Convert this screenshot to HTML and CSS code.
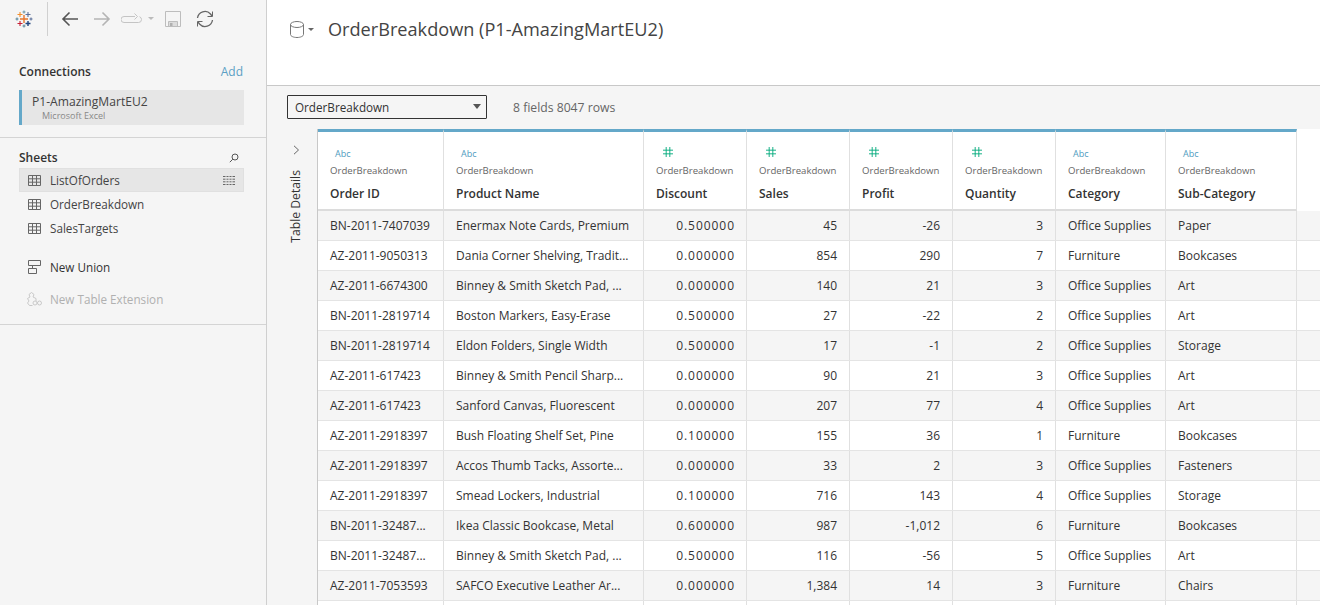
FILE: index.html
```html
<!DOCTYPE html>
<html lang="en">
<head>
<meta charset="utf-8">
<title>OrderBreakdown (P1-AmazingMartEU2)</title>
<link rel="stylesheet" href="styles.css">
</head>
<body>
<svg class="defs" width="0" height="0"><symbol id="hash" viewBox="0 0 11 11"><path d="M3.500 0v11M7.500 0v11M0 3.500h11M0 7.500h11" fill="none" stroke="#00a97a"/></symbol></svg>
<div class="app">
  <aside class="side">
    <div class="tools">
      <svg class="logo" width="18" height="18" viewBox="0 0 18 18" fill="none" stroke-width="1.100">
        <path d="M9 5v8M5 9h8" stroke="#e8762c" stroke-width="1.400"/>
        <path d="M5 2v5M2.500 4.500h5" stroke="#f28e2b"/>
        <path d="M13 2v5M10.500 4.500h5" stroke="#5b6f9a"/>
        <path d="M5 11v5M2.500 13.500h5" stroke="#c72035"/>
        <path d="M13 11v5M10.500 13.500h5" stroke="#1f447f" stroke-width="1.400"/>
        <path d="M9 .5v3M7.500 2h3" stroke="#7099a6"/>
        <path d="M9 14.500v3M7.500 16h3" stroke="#5b879b"/>
        <path d="M2 7.500v3M.5 9h3" stroke="#59879b"/>
        <path d="M16 7.500v3M14.500 9h3" stroke="#5b6f9a"/>
      </svg>
      <span class="vsep"></span>
      <svg class="ico back" width="18" height="16" viewBox="0 0 18 16" fill="none" stroke="#555" stroke-width="1.600"><path d="M17 8H2M8.500 1.500 2 8l6.500 6.500"/></svg>
      <svg class="ico fwd" width="18" height="16" viewBox="0 0 18 16" fill="none" stroke="#b4b4b4" stroke-width="1.600"><path d="M1 8h15M9.500 1.500 16 8l-6.500 6.500"/></svg>
      <svg class="ico redo" width="21" height="11" viewBox="0 0 21 11" fill="none" stroke="#c4c4c4" stroke-width="1"><path d="M14 3.500H3a2.500 2.500 0 0 0 0 6h14.500a3 3 0 0 0 3-3 3 3 0 0 0-2-2.800M13.500 .5 16.500 3.500 13.500 6.500"/></svg>
      <span class="caret-sm"></span>
      <svg class="ico save" width="16" height="16" viewBox="0 0 16 16" fill="none" stroke="#bdbdbd" stroke-width="1"><path d="M.5.500h15v15H.5z"/><path d="M3.500 15v-4.500h9V15" fill="#dcdcdc"/><path d="M5 12h2.500v3H5z" fill="#b0b0b0" stroke="none"/></svg>
      <svg class="ico sync" width="18" height="18" viewBox="0 0 18 18" fill="none" stroke="#666" stroke-width="1.300"><path d="M1.500 8A7.500 7.500 0 0 1 14.500 4L16 6M16.500 10A7.500 7.500 0 0 1 3.500 14L2 12"/><path d="M16.500 1.500V6.500H11.500M1.500 16.500V11.500H6.500" stroke-width="1"/></svg>
    </div>

    <section class="conn">
      <div class="head"><h2>Connections</h2><span class="add">Add</span></div>
      <div class="conn-item">
        <div class="conn-name">P1-AmazingMartEU2</div>
        <div class="conn-type">Microsoft Excel</div>
      </div>
    </section>

    <section class="sheets">
      <div class="head sheets-head">
        <h2>Sheets</h2>
        <svg width="10" height="10" viewBox="0 0 10 10" fill="none" stroke="#555" stroke-width="1"><circle cx="6" cy="4" r="3"/><path d="M3.800 6.200 .8 9.200"/></svg>
      </div>
      <ul class="list">
        <li class="item active">
          <svg class="tbl" width="13" height="11" viewBox="0 0 13 11" fill="none" stroke="#666"><path d="M.5.500h12v10H.5zM.5 3.800h12M.5 7.200h12M4.500 .5v10M8.500 .5v10"/></svg>
          <span>ListOfOrders</span>
          <svg class="rows" width="12" height="9" viewBox="0 0 12 9" fill="none" stroke="#666"><path d="M0 .5h12M0 3.200h12M0 5.800h12M0 8.500h12" /><path d="M3 0v9M6 0v9M9 0v9" stroke="#e6e6e6"/></svg>
        </li>
        <li class="item">
          <svg class="tbl" width="13" height="11" viewBox="0 0 13 11" fill="none" stroke="#666"><path d="M.5.500h12v10H.5zM.5 3.800h12M.5 7.200h12M4.500 .5v10M8.500 .5v10"/></svg>
          <span>OrderBreakdown</span>
        </li>
        <li class="item">
          <svg class="tbl" width="13" height="11" viewBox="0 0 13 11" fill="none" stroke="#666"><path d="M.5.500h12v10H.5zM.5 3.800h12M.5 7.200h12M4.500 .5v10M8.500 .5v10"/></svg>
          <span>SalesTargets</span>
        </li>
      </ul>
      <div class="item union">
        <svg class="tbl" width="13" height="14" viewBox="0 0 13 14" fill="none" stroke="#666"><path d="M.5.500h12v5h-12zM.5 8.500h8v5h-8zM4.500 5.500v3"/></svg>
        <span>New Union</span>
      </div>
      <div class="item ext">
        <svg class="tbl" width="15" height="14" viewBox="0 0 15 14" fill="none" stroke="#c4c4c4" stroke-width=".9"><path d="M4.500.5 7 2.500 6 5l3 1.500V9M4.500.5 2 2.500 3 5 .5 6.500 2 9 .5 11l2 2.500h3"/><circle cx="8" cy="11" r="2"/><circle cx="12.500" cy="11" r="2"/></svg>
        <span>New Table Extension</span>
      </div>
    </section>
  </aside>

  <main class="main">
    <header class="title">
      <svg class="cyl" width="14" height="17" viewBox="0 0 14 17" fill="none" stroke="#777"><path d="M.5 3.500v10c0 1.600 2.900 3 6.500 3s6.500-1.400 6.500-3v-10"/><ellipse cx="7" cy="3.500" rx="6.500" ry="3"/></svg>
      <span class="caret-sm dark"></span>
      <h1>OrderBreakdown (P1-AmazingMartEU2)</h1>
    </header>

    <div class="bar">
      <div class="select"><span>OrderBreakdown</span><i class="caret"></i></div>
      <span class="count">8 fields 8047 rows</span>
    </div>

    <div class="body">
      <div class="details">
        <svg width="7" height="10" viewBox="0 0 7 10" fill="none" stroke="#666"><path d="M1 .8 5.500 5 1 9.200"/></svg>
        <span class="details-label">Table Details</span>
      </div>
      <div class="grid">
        <div class="row hdr">
          <div class="cell c1"><i class="abc">Abc</i><small>OrderBreakdown</small><b>Order ID</b></div>
          <div class="cell c2"><i class="abc">Abc</i><small>OrderBreakdown</small><b>Product Name</b></div>
          <div class="cell c3"><svg class="num"><use href="#hash"/></svg><small>OrderBreakdown</small><b>Discount</b></div>
          <div class="cell c3"><svg class="num"><use href="#hash"/></svg><small>OrderBreakdown</small><b>Sales</b></div>
          <div class="cell c3"><svg class="num"><use href="#hash"/></svg><small>OrderBreakdown</small><b>Profit</b></div>
          <div class="cell c3"><svg class="num"><use href="#hash"/></svg><small>OrderBreakdown</small><b>Quantity</b></div>
          <div class="cell c4"><i class="abc">Abc</i><small>OrderBreakdown</small><b>Category</b></div>
          <div class="cell c5"><i class="abc">Abc</i><small>OrderBreakdown</small><b>Sub-Category</b></div>
        </div>
        <div class="row"><div class="cell c1">BN-2011-7407039</div><div class="cell c2">Enermax Note Cards, Premium</div><div class="cell c3 r d">0.500000</div><div class="cell c3 r">45</div><div class="cell c3 r">-26</div><div class="cell c3 r">3</div><div class="cell c4">Office Supplies</div><div class="cell c5">Paper</div></div>
        <div class="row"><div class="cell c1">AZ-2011-9050313</div><div class="cell c2">Dania Corner Shelving, Tradit...</div><div class="cell c3 r d">0.000000</div><div class="cell c3 r">854</div><div class="cell c3 r">290</div><div class="cell c3 r">7</div><div class="cell c4">Furniture</div><div class="cell c5">Bookcases</div></div>
        <div class="row"><div class="cell c1">AZ-2011-6674300</div><div class="cell c2">Binney &amp; Smith Sketch Pad, ...</div><div class="cell c3 r d">0.000000</div><div class="cell c3 r">140</div><div class="cell c3 r">21</div><div class="cell c3 r">3</div><div class="cell c4">Office Supplies</div><div class="cell c5">Art</div></div>
        <div class="row"><div class="cell c1">BN-2011-2819714</div><div class="cell c2">Boston Markers, Easy-Erase</div><div class="cell c3 r d">0.500000</div><div class="cell c3 r">27</div><div class="cell c3 r">-22</div><div class="cell c3 r">2</div><div class="cell c4">Office Supplies</div><div class="cell c5">Art</div></div>
        <div class="row"><div class="cell c1">BN-2011-2819714</div><div class="cell c2">Eldon Folders, Single Width</div><div class="cell c3 r d">0.500000</div><div class="cell c3 r">17</div><div class="cell c3 r">-1</div><div class="cell c3 r">2</div><div class="cell c4">Office Supplies</div><div class="cell c5">Storage</div></div>
        <div class="row"><div class="cell c1">AZ-2011-617423</div><div class="cell c2">Binney &amp; Smith Pencil Sharp...</div><div class="cell c3 r d">0.000000</div><div class="cell c3 r">90</div><div class="cell c3 r">21</div><div class="cell c3 r">3</div><div class="cell c4">Office Supplies</div><div class="cell c5">Art</div></div>
        <div class="row"><div class="cell c1">AZ-2011-617423</div><div class="cell c2">Sanford Canvas, Fluorescent</div><div class="cell c3 r d">0.000000</div><div class="cell c3 r">207</div><div class="cell c3 r">77</div><div class="cell c3 r">4</div><div class="cell c4">Office Supplies</div><div class="cell c5">Art</div></div>
        <div class="row"><div class="cell c1">AZ-2011-2918397</div><div class="cell c2">Bush Floating Shelf Set, Pine</div><div class="cell c3 r d">0.100000</div><div class="cell c3 r">155</div><div class="cell c3 r">36</div><div class="cell c3 r">1</div><div class="cell c4">Furniture</div><div class="cell c5">Bookcases</div></div>
        <div class="row"><div class="cell c1">AZ-2011-2918397</div><div class="cell c2">Accos Thumb Tacks, Assorte...</div><div class="cell c3 r d">0.000000</div><div class="cell c3 r">33</div><div class="cell c3 r">2</div><div class="cell c3 r">3</div><div class="cell c4">Office Supplies</div><div class="cell c5">Fasteners</div></div>
        <div class="row"><div class="cell c1">AZ-2011-2918397</div><div class="cell c2">Smead Lockers, Industrial</div><div class="cell c3 r d">0.100000</div><div class="cell c3 r">716</div><div class="cell c3 r">143</div><div class="cell c3 r">4</div><div class="cell c4">Office Supplies</div><div class="cell c5">Storage</div></div>
        <div class="row"><div class="cell c1">BN-2011-32487...</div><div class="cell c2">Ikea Classic Bookcase, Metal</div><div class="cell c3 r d">0.600000</div><div class="cell c3 r">987</div><div class="cell c3 r">-1,012</div><div class="cell c3 r">6</div><div class="cell c4">Furniture</div><div class="cell c5">Bookcases</div></div>
        <div class="row"><div class="cell c1">BN-2011-32487...</div><div class="cell c2">Binney &amp; Smith Sketch Pad, ...</div><div class="cell c3 r d">0.500000</div><div class="cell c3 r">116</div><div class="cell c3 r">-56</div><div class="cell c3 r">5</div><div class="cell c4">Office Supplies</div><div class="cell c5">Art</div></div>
        <div class="row"><div class="cell c1">AZ-2011-7053593</div><div class="cell c2">SAFCO Executive Leather Ar...</div><div class="cell c3 r d">0.000000</div><div class="cell c3 r">1,384</div><div class="cell c3 r">14</div><div class="cell c3 r">3</div><div class="cell c4">Furniture</div><div class="cell c5">Chairs</div></div>
        <div class="row"><div class="cell c1"></div><div class="cell c2"></div><div class="cell c3"></div><div class="cell c3"></div><div class="cell c3"></div><div class="cell c3"></div><div class="cell c4"></div><div class="cell c5"></div></div>
      </div>
    </div>
  </main>
</div>
</body>
</html>
```

FILE: styles.css
```css
* { box-sizing: border-box; }
html, body { margin: 0; height: 100%; overflow: hidden; background: #fff; }
body { font-family: "Open Sans", "Liberation Sans", sans-serif; font-size: 12px; color: #333; }
h1, h2, ul { margin: 0; padding: 0; }
ul { list-style: none; }
i { font-style: normal; }
.defs { display: block; height: 0; }

.app { display: flex; width: 1320px; height: 605px; overflow: hidden; }

.side { width: 267px; flex: none; background: #f5f5f5; border-right: 1px solid #cfcfcf; }
.tools { display: flex; align-items: center; height: 37px; padding-left: 15px; }
.logo { flex: none; overflow: visible; }
.vsep { width: 1px; height: 34px; margin-left: 14px; background: #d0d0d0; }
.ico { flex: none; }
.back { margin-left: 13px; }
.fwd { margin-left: 14px; }
.redo { margin-left: 10px; }
.caret-sm { width: 0; height: 0; margin-left: 6px; border: 3px solid transparent; border-top: 3px solid #bbb; border-bottom: 0; }
.caret-sm.dark { border-top-color: #666; margin-left: 4px; }
.save { margin-left: 11px; }
.sync { margin-left: 15px; }

.conn { padding: 27px 22px 12px 19px; border-bottom: 1px solid #d4d4d4; height: 101px; }
.head { display: flex; justify-content: space-between; align-items: center; }
.head h2 { font-size: 12px; font-weight: 600; color: #333; line-height: 16px; }
.add { color: #5b9fc4; font-size: 12px; line-height: 16px; margin-right: 1px; }
.conn-item { margin-top: 10px; height: 35px; background: #e6e6e6; border-left: 3px solid #64a8c9; padding: 4px 0 0 10px; }
.conn-name { font-size: 12.100px; line-height: 15px; color: #444; }
.conn-type { font-size: 9px; line-height: 13px; color: #888; padding-left: 10px; }

.sheets { height: 187px; padding: 12px 22px 0 19px; border-bottom: 1px solid #d4d4d4; }
.sheets-head { padding-right: 5px; }
.list { margin-top: 2px; }
.item { display: flex; align-items: center; height: 24px; padding-left: 9px; color: #444; font-size: 11.700px; }
.item span { margin-left: 9px; }
.item.active { background: #e6e6e6; border: 1px solid #e0e0e0; padding-left: 8px; }
.rows { margin-left: auto; margin-right: 8px; }
.union { margin-top: 15px; color: #333; }
.ext { margin-top: 8px; color: #b0b0b0; }
.ext .tbl { margin-left: -1px; margin-right: -1px; }

.main { flex: 1; min-width: 0; display: flex; flex-direction: column; }
.title { display: flex; align-items: center; height: 86px; padding: 0 0 27px 23px; border-bottom: 1px solid #c8c8c8; flex: none; }
.title h1 { margin-left: 14px; font-size: 18.150px; font-weight: 400; color: #444; line-height: 24px; }
.bar { display: flex; align-items: center; height: 43px; padding: 0 0 1px 20px; background: #f5f5f5; flex: none; }
.select { display: flex; align-items: center; justify-content: space-between; width: 200px; height: 24px; padding: 0 5px 1px 7px; border: 1px solid #333; border-radius: 1px; color: #333; font-size: 11.700px; }
.caret { width: 0; height: 0; border: 4px solid transparent; border-top: 5px solid #555; border-bottom: 0; }
.count { margin-left: 26px; color: #666; font-size: 12.200px; }

.body { flex: 1; display: flex; min-height: 0; }
.details { width: 51px; flex: none; background: #f5f5f5; border-right: 1px solid #c8c8c8; display: flex; flex-direction: column; align-items: center; padding: 16px 0 0 8px; }
.details-label { writing-mode: vertical-rl; transform: rotate(180deg); margin: 15px 0 0 -1px; color: #333; font-size: 12.200px; }

.grid { flex: 1; min-width: 0; overflow: hidden; }
.row { display: flex; height: 30px; border-bottom: 1px solid #e4e4e4; background: #fff; }
.row:nth-child(even) { background: #f5f5f5; }
.cell { flex: none; padding: 0 12px; line-height: 29px; color: #333; white-space: nowrap; overflow: hidden; border-right: 1px solid #e0e0e0; }
.c1 { width: 126px; }
.c2 { width: 200px; }
.c3 { width: 103px; }
.c4 { width: 110px; }
.c5 { width: 131px; }
.r { text-align: right; }
.d { letter-spacing: .95px; padding-right: 11px; }

.hdr { height: 82px; background: #fff; border-bottom: 0; }
.hdr .cell { display: flex; flex-direction: column; align-items: flex-start; border-top: 3px solid #64a8c9; border-bottom: 2px solid #dcdcdc; line-height: normal; padding-right: 8px; }
.hdr small { margin-top: 3px; font-size: 9.600px; line-height: 14px; color: #666; }
.hdr b { margin-top: 8px; font-size: 12px; font-weight: 600; line-height: 16px; color: #333; }
.abc { margin: 15px 0 0 5px; height: 14px; font-size: 9px; line-height: 14px; color: #4f9cc0; }
.num { margin: 15px 0 0 7px; width: 10px; height: 10px; flex: none; }
.num + small { margin-top: 7px; }
```
